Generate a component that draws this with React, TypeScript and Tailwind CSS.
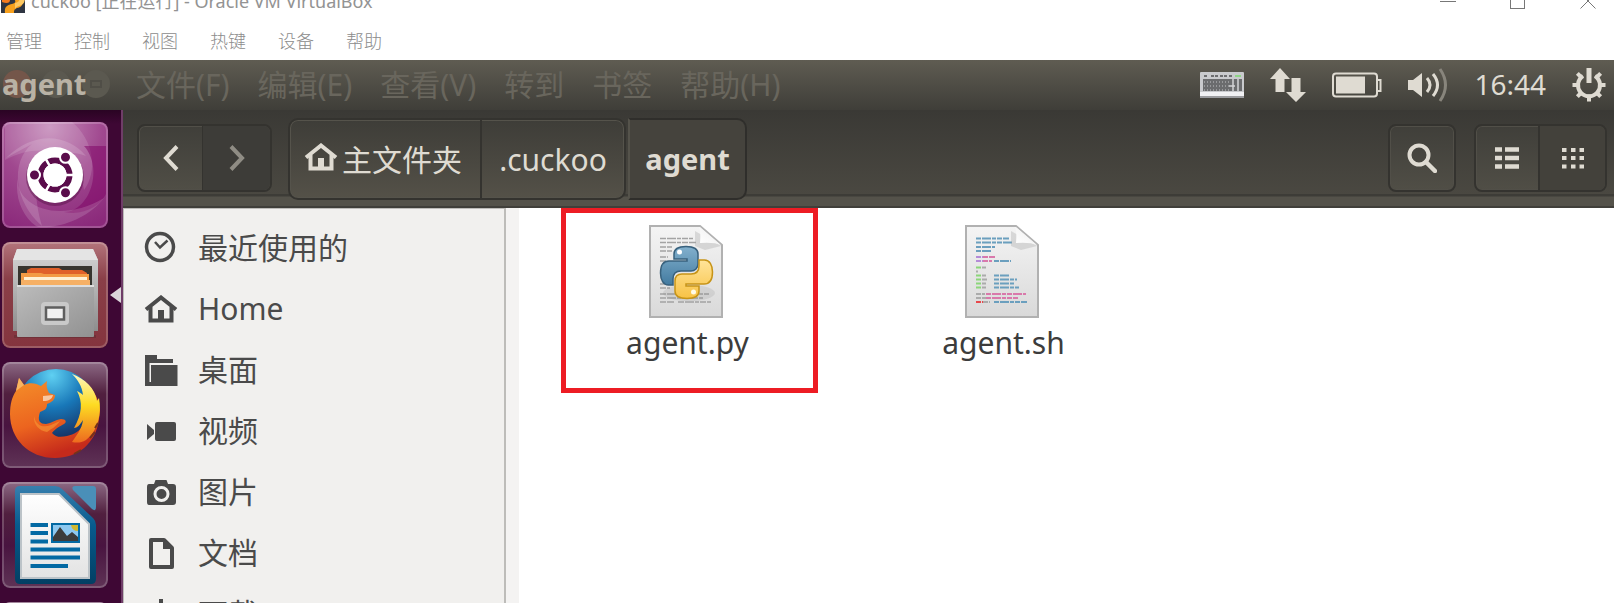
import type { ReactNode } from 'react';

const hostMenus = ['管理', '控制', '视图', '热键', '设备', '帮助'];
const appMenus = ['文件(F)', '编辑(E)', '查看(V)', '转到', '书签', '帮助(H)'];

/* ---------- host window ---------- */

function HostLogo() {
  return (
    <svg viewBox="0 0 24 24" className="size-6 shrink-0" aria-hidden="true">
      <rect width="24" height="24" fill="#2f3542" />
      <path d="M4 24c-1-7 3-8 7-9 4-1 4-3 2-5h9c0 7-2 8-6 9-3 1-3 3-3 5z" fill="#f7a01d" />
      <path d="M14 14c4-1 5-2 4-6h6c0 6-2 8-6 9-3 1-4 2-4 4z" fill="#fdc863" />
      <path d="M1 11h8c0 3-3 4-8 2z" fill="#f47b20" />
    </svg>
  );
}

function HostWindow() {
  return (
    <header className="flex h-[60px] shrink-0 flex-col justify-between overflow-hidden bg-white font-['Noto_Sans','Noto_Sans_CJK_SC',sans-serif] text-lg text-[#8c8c8c]">
      <div className="flex h-[13px] items-end pl-px">
        <HostLogo />
        <h1 className="ml-1.5 shrink-0 leading-6 font-normal text-[#939393]">cuckoo [正在运行] - Oracle VM VirtualBox</h1>
        <div className="ml-auto flex items-end gap-[54px] pr-[18px] pb-1">
          <button type="button" aria-label="最小化">
            <svg viewBox="0 0 16 16" className="block size-4" fill="none" stroke="#777" shapeRendering="crispEdges">
              <path d="M0 8.500h16" />
            </svg>
          </button>
          <button type="button" aria-label="最大化">
            <svg viewBox="0 0 16 16" className="block size-4" fill="none" stroke="#777" shapeRendering="crispEdges">
              <path d="M.5.5h14v15H.5z" />
            </svg>
          </button>
          <button type="button" aria-label="关闭">
            <svg viewBox="0 0 16 16" className="block size-4" fill="none" stroke="#777">
              <path d="M.5.5l15 15M15.500.5l-15 15" />
            </svg>
          </button>
        </div>
      </div>
      <nav className="flex gap-8 pb-[5px] pl-1.5">
        {hostMenus.map((m) => (
          <button key={m} type="button" className="font-light leading-7">
            {m}
          </button>
        ))}
      </nav>
    </header>
  );
}

/* ---------- guest top panel ---------- */

function KeyboardIcon() {
  const keys = Array.from({ length: 27 }, (_, i) => [4 + (i % 9) * 3, 9 + Math.floor(i / 9) * 4]);
  return (
    <svg viewBox="0 0 44 26" className="h-[26px] w-11">
      <rect width="44" height="26" rx="1" fill="#c9cacd" />
      <rect y="20" width="44" height="4" fill="#f1f1f3" />
      <rect y="24" width="44" height="2" fill="#9c9da0" />
      <rect x="3" y="7" width="39" height="12" fill="#6b6c6e" />
      {keys.map(([x, y]) => (
        <rect key={`${x}-${y}`} x={x} y={y} width="1" height="2" fill="#97989a" />
      ))}
      <path d="M4 4h3M11 4h3M15 4h3M20 4h3M24 4h3M29 4h3" stroke="#6d6e70" strokeWidth="2" />
      <rect x="35" y="3" width="6" height="2" fill="#8fd487" />
      <path d="M29 14h6M33 7v12M38 7v12" stroke="#d4d4d6" strokeWidth="1.500" />
    </svg>
  );
}

function NetworkIcon() {
  return (
    <svg viewBox="0 0 36 34" className="h-[34px] w-9" fill="#dfdbd2">
      <path d="M10 0l10 11h-5.500v13h-9V11H0z" />
      <path d="M26 34L16 24h5.500V10h9v14H36z" />
    </svg>
  );
}

function BatteryIcon() {
  return (
    <svg viewBox="0 0 50 26" className="h-[26px] w-[50px]">
      <rect x="1" y="1.500" width="44" height="23" rx="3" fill="none" stroke="#dfdbd2" strokeWidth="2" />
      <rect x="4" y="4.500" width="29" height="17" fill="#dfdbd2" />
      <path d="M45 8h3.500v11H45" fill="none" stroke="#dfdbd2" strokeWidth="2" />
    </svg>
  );
}

function VolumeIcon() {
  return (
    <svg viewBox="0 0 40 34" className="h-[34px] w-10" fill="none" strokeWidth="3">
      <path d="M0 12h5l9-7v24l-9-7H0z" fill="#dfdbd2" />
      <path d="M19 10q6 7 0 14" stroke="#dfdbd2" />
      <path d="M25 6q9 11 0 22" stroke="#dfdbd2" />
      <path d="M32 1q11 16 0 32" stroke="#88857c" />
    </svg>
  );
}

function SessionIcon() {
  const teeth = [45, 90, 135, 180, 225, 270, 315];
  return (
    <svg viewBox="0 0 34 34" className="size-[34px]">
      {teeth.map((a) => (
        <rect key={a} x="15" y="0.500" width="4" height="7" fill="#dfdbd2" transform={`rotate(${a} 17 17)`} />
      ))}
      <path d="M11 8a11 11 0 1 0 12 0" fill="none" stroke="#dfdbd2" strokeWidth="4" />
      <rect x="14.500" y="0" width="5" height="15" fill="#dfdbd2" />
    </svg>
  );
}

function TopPanel() {
  return (
    <div className="relative flex h-[50px] shrink-0 items-center bg-linear-to-b from-[#5f5c52] to-[#3f3e39]">
      <svg viewBox="0 0 112 30" className="absolute top-[9px] left-0 h-[30px] w-28" aria-hidden="true">
        <circle cx="17" cy="15" r="14" fill="#74564a" />
        <circle cx="56" cy="15" r="14" fill="#5b5950" />
        <circle cx="96" cy="15" r="14" fill="#5b5950" />
        <rect x="91" y="12" width="10" height="6" fill="none" stroke="#504e47" strokeWidth="2" />
      </svg>
      <strong className="relative w-[136px] shrink-0 pb-0.5 pl-0.5 text-[29px] leading-[46px] text-[#b9b2a5]">agent</strong>
      <nav className="flex gap-7 text-[30px] text-[#69665d]">
        {appMenus.map((m) => (
          <button key={m} type="button" className="leading-[50px] whitespace-nowrap">
            {m}
          </button>
        ))}
      </nav>
      <div className="ml-auto flex items-center gap-[26px] pr-2">
        <button type="button" aria-label="键盘"><KeyboardIcon /></button>
        <button type="button" aria-label="网络"><NetworkIcon /></button>
        <button type="button" aria-label="电池"><BatteryIcon /></button>
        <button type="button" aria-label="音量"><VolumeIcon /></button>
        <time className="pb-0.5 text-[28px] leading-[46px] text-[#dfdbd2]">16:44</time>
        <button type="button" aria-label="会话"><SessionIcon /></button>
      </div>
    </div>
  );
}

/* ---------- launcher ---------- */

function UbuntuIcon() {
  return (
    <svg viewBox="0 0 106 106" className="size-full">
      <defs>
        <radialGradient id="dash" cx=".45" cy=".05" r="1">
          <stop offset="0" stopColor="#c58cba" />
          <stop offset=".5" stopColor="#a0488f" />
          <stop offset="1" stopColor="#8b2a7b" />
        </radialGradient>
      </defs>
      <rect width="106" height="106" fill="url(#dash)" />
      <path d="M70 0C92 18 96 50 82 68 78 30 40 18 3 38V0z" fill="#fff" opacity=".13" />
      <path d="M4 36C32 8 66 12 84 34 50 22 22 44 40 104 12 80 8 40 30 22z" fill="#fff" opacity=".15" />
      <path d="M82 24c20 22 6 66-20 66 20 4 36-6 42-18V24z" fill="#7d0063" opacity=".5" />
      <path d="M16 54c-4 28 38 50 86 22-22 28-62 32-68 28-14-10-22-30-18-50z" fill="#fff" opacity=".15" />
      <circle cx="53" cy="55" r="29" fill="#4a0a3d" opacity=".4" />
      <circle cx="53" cy="53" r="28" fill="#fff" />
      <circle cx="53" cy="53" r="14.500" fill="none" stroke="#5a0c4b" strokeWidth="6" />
      <path d="M53 53h20M53 53L43 35.700M53 53L43 70.300" stroke="#fff" strokeWidth="2.500" />
      <circle cx="53" cy="53" r="11.500" fill="#fff" />
      <g fill="#5a0c4b" stroke="#fff" strokeWidth="2">
        <circle cx="32.500" cy="53" r="5.500" />
        <circle cx="63.500" cy="35.300" r="5.500" />
        <circle cx="63.500" cy="70.700" r="5.500" />
      </g>
    </svg>
  );
}

function FilesIcon() {
  return (
    <svg viewBox="0 0 106 106" className="size-full">
      <defs>
        <linearGradient id="filesBg" x2="0" y2="1">
          <stop offset="0" stopColor="#b3757c" />
          <stop offset=".35" stopColor="#8a3f48" />
          <stop offset="1" stopColor="#84343e" />
        </linearGradient>
        <linearGradient id="metal" x2="0" y2="1">
          <stop offset="0" stopColor="#d6d6d6" />
          <stop offset="1" stopColor="#8d8d8d" />
        </linearGradient>
        <linearGradient id="front" x2="1" y2="1">
          <stop offset="0" stopColor="#bcbcbc" />
          <stop offset="1" stopColor="#919191" />
        </linearGradient>
      </defs>
      <rect width="106" height="106" fill="url(#filesBg)" />
      <path d="M15 7h76l5 11v71H11V18z" fill="url(#metal)" />
      <path d="M15 7h76l5 11H11z" fill="#e4e4e4" />
      <rect x="16" y="24" width="74" height="20" fill="#37352f" />
      <path d="M25 28l4-2h28l3 2h20l5 3v12H25z" fill="#e0602a" />
      <path d="M19 43V31h20l3 1h45v11z" fill="#f39a45" />
      <path d="M22 35h63v3H22z" fill="#fff0d5" />
      <path d="M19 38h69v6H19z" fill="#f6b065" />
      <path d="M12 93h82v3H12z" fill="#5d2930" opacity=".5" />
      <rect x="15" y="43" width="77" height="52" rx="1" fill="url(#front)" />
      <path d="M15 44h77" stroke="#dedede" strokeWidth="2" />
      <rect x="39" y="60" width="28" height="23" rx="4" fill="#c9c9c9" />
      <rect x="44" y="65.500" width="18" height="12" fill="#f1f1f1" stroke="#5f5f5f" strokeWidth="2.500" />
    </svg>
  );
}

function GlassTile() {
  return (
    <>
      <defs>
        <linearGradient id="glass" x2="0" y2="1">
          <stop offset="0" stopColor="#8d6a85" />
          <stop offset=".3" stopColor="#51203f" />
          <stop offset=".6" stopColor="#491440" />
          <stop offset="1" stopColor="#5f3356" />
        </linearGradient>
      </defs>
      <rect width="106" height="106" fill="url(#glass)" />
    </>
  );
}

function FirefoxIcon() {
  return (
    <svg viewBox="0 0 106 106" className="size-full">
      <defs>
        <radialGradient id="globe" cx=".45" cy=".08" r=".9">
          <stop offset="0" stopColor="#5fd0f2" />
          <stop offset=".45" stopColor="#1877b8" />
          <stop offset="1" stopColor="#15204f" />
        </radialGradient>
        <linearGradient id="fox" x2=".35" y2="1">
          <stop offset="0" stopColor="#f5912a" />
          <stop offset=".6" stopColor="#ec641f" />
          <stop offset="1" stopColor="#c52a1b" />
        </linearGradient>
        <linearGradient id="tail" x2="0" y2="1">
          <stop offset="0" stopColor="#fff8c0" />
          <stop offset=".45" stopColor="#fddb22" />
          <stop offset="1" stopColor="#ee6a1f" />
        </linearGradient>
      </defs>
      <GlassTile />
      <circle cx="54" cy="47" r="40" fill="url(#globe)" />
      <path
        d="M80 18c10 6 17 18 18 31l-1 8c-3 25-22 39-44 39C27 96 8 77 8 52c0-10 2-17 6-23l3-13 5 7c6-3 12-2 17 1l6-5c-1 5 0 8 2 12l6 2c0 5-3 7-8 9 0 5-2 6-7 8-3 9 0 12 6 12 6-1 9-4 15-5 5 0 6 3 3 5-5 3-8 4-12 9 4 5 10 4 15 3 15-3 20-14 20-27 0-10-1-19-5-29z"
        fill="url(#fox)"
      />
      <path
        d="M70 12c13 5 23 14 25 27l2-3c3 15-1 33-13 42-5 3-9 3-14 2 4-6 10-13 11-22-3 5-6 8-9 8 8-14 9-26 3-37 2 1 4 2 6 4-1-9-5-15-11-21z"
        fill="url(#tail)"
      />
      <path d="M32 54c2 10 9 12 17 9l9-4c-4 6-9 8-13 11-8-1-14-8-13-16z" fill="#f89a36" opacity=".6" />
      <path d="M41 34l10-1c-1 4-4 6-10 6z" fill="#f8c7a1" />
      <path d="M17 16l5 7-8 6z" fill="#f9b461" />
      <path d="M88 76l5-6M72 92l7-4M93 66l3-5" stroke="#74331b" strokeWidth="2" />
    </svg>
  );
}

function WriterIcon() {
  return (
    <svg viewBox="0 0 106 106" className="size-full">
      <defs>
        <linearGradient id="writer" x2="0" y2="1">
          <stop offset="0" stopColor="#377fae" />
          <stop offset=".4" stopColor="#075b8e" />
          <stop offset="1" stopColor="#033f63" />
        </linearGradient>
        <linearGradient id="paper" x2="0" y2="1">
          <stop offset="0" stopColor="#fff" />
          <stop offset="1" stopColor="#e3e3e3" />
        </linearGradient>
      </defs>
      <GlassTile />
      <path d="M18 4h35q4 0 7 3l31 29q3 3 3 7v54q0 5-5 5H18q-5 0-5-5V9q0-5 5-5z" fill="url(#writer)" />
      <path d="M73 4h18q3 0 3 3v18q0 5-4 2L71 8q-2-4 2-4z" fill="#4a8fb8" />
      <path d="M19 12h38l30 30v54H19z" fill="url(#paper)" stroke="#bcc3c8" strokeWidth="2" />
      <g stroke="#0369a3" strokeWidth="4">
        <path d="M28.500 43H46M28.500 51H46M28.500 59.500H46M28.500 67.500H78M28.500 75.500H78M28.500 84H66" />
      </g>
      <rect x="50" y="42" width="27" height="18" fill="#8dc8ef" stroke="#0369a3" strokeWidth="2" />
      <path d="M51 59V55l7-10 7 9 5-4 6 5v4z" fill="#3c3c3c" />
      <path d="M69 43h7v6q-6 0-7-6z" fill="#d0b72f" />
    </svg>
  );
}

function TrayIcon() {
  return (
    <svg viewBox="0 0 106 106" className="size-full">
      <GlassTile />
    </svg>
  );
}

function LauncherItem({ label, active, children }: { label: string; active?: boolean; children: ReactNode }) {
  return (
    <li className="flex items-center">
      <button
        type="button"
        aria-label={label}
        className="relative size-[106px] shrink-0 overflow-hidden rounded-lg after:absolute after:inset-0 after:rounded-lg after:border-2 after:border-white/20"
      >
        {children}
      </button>
      {active && (
        <svg viewBox="0 0 11 16" className="ml-0.5 h-4 w-[11px]" aria-hidden="true">
          <path d="M11 0v16L0 8z" fill="#dcd5da" />
        </svg>
      )}
    </li>
  );
}

function Launcher() {
  return (
    <aside className="w-[123px] shrink-0 overflow-hidden border-r-2 border-[#6f3d68] bg-linear-to-b from-[#2a0423] to-[#3e0734] to-[14px]">
      <ul className="flex flex-col gap-3.5 pt-3 pl-0.5">
        <LauncherItem label="搜索您的计算机"><UbuntuIcon /></LauncherItem>
        <LauncherItem label="文件" active><FilesIcon /></LauncherItem>
        <LauncherItem label="Firefox"><FirefoxIcon /></LauncherItem>
        <LauncherItem label="LibreOffice Writer"><WriterIcon /></LauncherItem>
        <LauncherItem label="LibreOffice Calc"><TrayIcon /></LauncherItem>
      </ul>
    </aside>
  );
}

/* ---------- file manager ---------- */

function HomeIcon({ className }: { className: string }) {
  return (
    <svg viewBox="0 0 34 28" className={className} aria-hidden="true">
      <path d="M2 14.500L17 2.500l15 12" fill="none" stroke="currentColor" strokeWidth="4" />
      <path d="M6.500 12v13.500h21V12" fill="none" stroke="currentColor" strokeWidth="4" />
      <rect x="14" y="15" width="6" height="11" fill="currentColor" />
    </svg>
  );
}

const groupShell =
  'flex h-[68px] shrink-0 overflow-hidden rounded-lg border-2 border-[#34332f] bg-linear-to-b from-[#403f3a] to-[#504e46] shadow-[0_0_0_1px_#514f48_inset]';

function Toolbar() {
  return (
    <div className="flex h-[98px] shrink-0 items-start border-b-2 border-[#403f3a] bg-[linear-gradient(#3a3935_0,#4a4841_84px,#3d3c37_84px,#3d3c37_86px,#54524a_87px,#54524a_100%)] pr-[7px] pl-3.5 text-[#dfdbd2]">
      <div className={`${groupShell} mt-3.5 w-[135px]`}>
        <button type="button" aria-label="后退" className="flex w-[63px] items-center justify-center">
          <svg viewBox="0 0 16 26" className="h-[26px] w-4" fill="none" stroke="#dfdbd2" strokeWidth="4">
            <path d="M14 1.500L3 13l11 11.500" />
          </svg>
        </button>
        <button type="button" aria-label="前进" className="flex flex-1 items-center justify-center border-l border-[#34332f] bg-[#3d3c38]">
          <svg viewBox="0 0 16 26" className="h-[26px] w-4" fill="none" stroke="#8f8c84" strokeWidth="4">
            <path d="M2 1.500L13 13 2 24.500" />
          </svg>
        </button>
      </div>

      <nav className="mt-2 ml-4 flex h-[82px] shrink-0 text-[30px]">
        <div className="flex rounded-[10px] border-2 border-[#34332f] bg-linear-to-b from-[#3e3d38] to-[#545148] shadow-[0_0_0_1px_#55534b_inset]">
          <button type="button" className="flex w-[192px] items-center gap-1 border-r-2 border-[#34332f] pl-3.5">
            <HomeIcon className="-mt-1 h-7 w-[34px]" />
            <span>主文件夹</span>
          </button>
          <button type="button" className="w-[142px]">.cuckoo</button>
        </div>
        <button type="button" className="ml-0.5 w-[119px] rounded-r-[10px] border-2 border-[#2f2e2b] border-l-[#55534b] bg-[#45433d] text-[29px] font-bold">
          agent
        </button>
      </nav>

      <div className="mt-3.5 ml-auto flex gap-[18px]">
        <button type="button" aria-label="搜索" className={`${groupShell} w-[68px] items-center justify-center`}>
          <svg viewBox="0 0 30 30" className="size-[30px]" fill="none" stroke="#dfdbd2">
            <circle cx="12" cy="12" r="9.500" strokeWidth="4" />
            <path d="M19 19l9 9" strokeWidth="4.500" strokeLinecap="round" />
          </svg>
        </button>
        <div className={`${groupShell} w-[133px]`}>
          <button type="button" aria-label="列表视图" className="flex w-[62px] items-center justify-center">
            <svg viewBox="0 0 24 22" className="h-[22px] w-6" stroke="#dfdbd2" strokeWidth="4.500">
              <path d="M0 2.500h7M10 2.500h14M0 11h7M10 11h14M0 19.500h7M10 19.500h14" />
            </svg>
          </button>
          <button type="button" aria-label="图标视图" className="flex flex-1 items-center justify-center border-l-2 border-[#34332f] bg-[#43413b]">
            <svg viewBox="0 0 22 22" className="size-[22px]" stroke="#dfdbd2" strokeWidth="4">
              <path d="M0 3h4.500M9 3h4.500M17.500 3H22M0 11h4.500M9 11h4.500M17.500 11H22M0 19.500h4.500M9 19.500h4.500M17.500 19.500H22" />
            </svg>
          </button>
        </div>
      </div>
    </div>
  );
}

const svgProps = { viewBox: '0 0 34 34', className: 'size-[34px]', 'aria-hidden': true } as const;

const places: { label: string; icon: ReactNode }[] = [
  {
    label: '最近使用的',
    icon: (
      <svg {...svgProps} fill="none" stroke="#4a4a4a">
        <circle cx="16" cy="16" r="13.500" strokeWidth="3.500" />
        <path d="M11 11l5 5.500 7.500-7" strokeWidth="2.500" />
      </svg>
    ),
  },
  { label: 'Home', icon: <HomeIcon className="h-7 w-[34px]" /> },
  {
    label: '桌面',
    icon: (
      <svg {...svgProps} fill="#4a4a4a">
        <path d="M1 2h12v4h16v4H5.500v19H7V12h26.500v21H1z" />
      </svg>
    ),
  },
  {
    label: '视频',
    icon: (
      <svg {...svgProps} fill="#4a4a4a">
        <path d="M3 10l7 6v4l-7 6z" />
        <rect x="11" y="8" width="21" height="19" rx="2" />
      </svg>
    ),
  },
  {
    label: '图片',
    icon: (
      <svg {...svgProps}>
        <path d="M5 9h5l1.500-4h11L24 9h5q3 0 3 3v15q0 3-3 3H5q-2 0-2-3V12q0-3 2-3z" fill="#4a4a4a" />
        <circle cx="17.500" cy="19" r="6.500" fill="none" stroke="#f1f0ee" strokeWidth="3" />
      </svg>
    ),
  },
  {
    label: '文档',
    icon: (
      <svg {...svgProps}>
        <path d="M7 4h13l8 8v19H7z" fill="none" stroke="#4a4a4a" strokeWidth="4" strokeLinejoin="round" />
        <path d="M19 4v9h9z" fill="#4a4a4a" />
      </svg>
    ),
  },
  {
    label: '下载',
    icon: (
      <svg {...svgProps} fill="#4a4a4a">
        <path d="M15 2h4v17h8L17 30 7 19h8z" />
      </svg>
    ),
  },
];

function Sidebar() {
  return (
    <nav className="w-[383px] shrink-0 overflow-hidden border-t border-r-2 border-l border-[#bdbcb9] bg-[#f1f0ee] pt-2 text-[30px] text-[#4a4a4a]">
      <ul>
        {places.map((p) => (
          <li key={p.label}>
            <a href="#" className="flex h-[61px] items-center gap-5 pl-5">
              {p.icon}
              <span>{p.label}</span>
            </a>
          </li>
        ))}
      </ul>
    </nav>
  );
}

function Page({ children }: { children: ReactNode }) {
  return (
    <svg viewBox="0 0 74 93" className="mr-1 h-[93px] w-[74px]" aria-hidden="true">
      <defs>
        <linearGradient id="sheet" x2="0" y2="1">
          <stop offset="0" stopColor="#f4f4f4" />
          <stop offset="1" stopColor="#d9d9d9" />
        </linearGradient>
        <linearGradient id="curl" x1="0" y1="1" x2="1" y2="0">
          <stop offset="0" stopColor="#fff" />
          <stop offset=".5" stopColor="#f6f6f6" />
          <stop offset="1" stopColor="#c4c4c4" />
        </linearGradient>
      </defs>
      <path d="M1 1h50l22 19v72H1z" fill="url(#sheet)" stroke="#b1b1b1" strokeWidth="2" />
      {children}
      <path d="M46 6v15l10 4 16-4z" fill="#a5a5a5" opacity=".35" />
      <path d="M50 2q2 4 1 16 14-1 21 2L51 2z" fill="url(#curl)" />
    </svg>
  );
}

function PythonFileIcon() {
  return (
    <Page>
      <path
        d="M11 13.500h33M11 17.500h36M11 22h12M11 26h12M11 32h8M11 36h6M11 59h6M11 63h10M11 69h49M11 73h43M11 77h14M29 77h33"
        stroke="#a3a3a3"
        strokeWidth="1.500"
        strokeDasharray="6 1 9 1 4 1"
      />
      <defs>
        <linearGradient id="pyBlue" x2="0" y2="1">
          <stop offset="0" stopColor="#82b0cd" />
          <stop offset="1" stopColor="#437ba0" />
        </linearGradient>
        <linearGradient id="pyGold" x2="0" y2="1">
          <stop offset="0" stopColor="#ffe49a" />
          <stop offset="1" stopColor="#f8c245" />
        </linearGradient>
      </defs>
      <ellipse cx="40" cy="68" rx="26" ry="8" fill="#777" opacity=".15" />
      <path
        d="M37 21.500c-9 0-12 3-12 7.500v5h13v2H20c-6 0-8.500 5-8.500 12s3 12 8 12h4.500v-6c0-5 3-8 8-8h10c4 0 7-3 7-7V29c0-5-4-7.500-12-7.500z"
        fill="url(#pyBlue)"
        stroke="#38617d"
        strokeWidth="1.500"
      />
      <path
        d="M38 73.500c9 0 12-3 12-7.500v-5H37v-2h18c6 0 8.500-5 8.500-12s-3-12-8-12H50v6c0 5-3 8-8 8H33c-5 0-7 3-7 7v10c0 5 4 7.500 12 7.500z"
        fill="url(#pyGold)"
        stroke="#c79417"
        strokeWidth="1.500"
      />
      <circle cx="30.500" cy="27" r="2.500" fill="#fff" />
      <circle cx="44.500" cy="67" r="2.500" fill="#fffbe8" />
    </Page>
  );
}

function ShellFileIcon() {
  return (
    <Page>
      <g strokeWidth="2" fill="none" strokeDasharray="5 1 9 1 4 1">
        <path d="M11 13.500h33M11 17.500h37M11 22h19M11 26h15M29 36h17M29 50.500h15M29 54.500h23M29 58.500h21M29 62.500h25M29 77h33" stroke="#6b9fbe" />
        <path d="M11 32h7M11 36h7" stroke="#b58bd8" />
        <path d="M18 32h12M18 36h9M21 69h40M21 73h32" stroke="#d979ab" />
        <path d="M11 42.500h5M11 50.500h6M11 54.500h6M11 58.500h6M11 62.500h5" stroke="#8bd67a" />
        <path d="M17 42.500h4M11 46.500h2M17 50.500h4M17 54.500h6M17 58.500h4M17 62.500h4M11 69h9M11 73h10M18 77h7" stroke="#ababab" />
        <path d="M11 77h7" stroke="#e8474a" />
      </g>
    </Page>
  );
}

function FileItem({ name, marked, children }: { name: string; marked?: boolean; children: ReactNode }) {
  return (
    <button
      type="button"
      className={`flex h-[185px] w-[257px] shrink-0 flex-col items-center border-[5px] pt-3 pr-1 text-[30px] leading-[44px] text-[#3c3c3c] ${
        marked ? 'border-[#ed1c24]' : 'border-transparent'
      }`}
    >
      {children}
      <span className="mt-[3px]">{name}</span>
    </button>
  );
}

export default function App() {
  return (
    <div className="flex h-screen flex-col overflow-hidden bg-white font-['Noto_Sans','Noto_Sans_CJK_SC',sans-serif]">
      <HostWindow />
      <TopPanel />
      <div className="flex min-h-0 flex-1">
        <Launcher />
        <section className="flex min-w-0 flex-1 flex-col">
          <Toolbar />
          <div className="flex min-h-0 flex-1">
            <Sidebar />
            <div className="w-[13px] shrink-0 bg-[#f4f3f2]" />
            <main className="flex min-w-0 flex-1 items-start gap-[59px] bg-white pl-[42px]">
              <FileItem name="agent.py" marked>
                <PythonFileIcon />
              </FileItem>
              <FileItem name="agent.sh">
                <ShellFileIcon />
              </FileItem>
            </main>
          </div>
        </section>
      </div>
    </div>
  );
}
